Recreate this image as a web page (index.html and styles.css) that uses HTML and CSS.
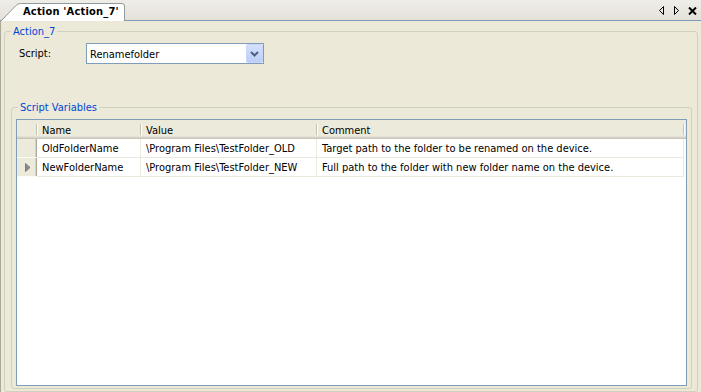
FILE: index.html
```html
<!DOCTYPE html>
<html>
<head>
<meta charset="utf-8">
<title>Action 'Action_7'</title>
<link rel="stylesheet" href="styles.css">
</head>
<body>
<div class="window">
  <div class="tabstrip">
    <div class="tab">
      <svg class="tab-shape" width="126" height="18" viewBox="0 0 126 18">
        <path d="M0.5,18.5 L15.5,3 Q17.5,0.5 20.5,0.5 L122,0.5 Q124.5,0.5 124.5,3 L124.5,18.5" fill="#ffffff" stroke="#919b9c" stroke-width="1"/>
      </svg>
      <span class="tab-label">Action 'Action_7'</span>
    </div>
    <div class="tab-controls">
      <svg class="ctl" width="6" height="9" viewBox="0 0 6 9"><path d="M4.5,0.5 L0.5,4.5 L4.5,8.5 Z" fill="none" stroke="#000" stroke-width="1"/></svg>
      <svg class="ctl ctl-next" width="6" height="9" viewBox="0 0 6 9"><path d="M0.5,0.5 L4.5,4.5 L0.5,8.5 Z" fill="none" stroke="#000" stroke-width="1"/></svg>
      <svg class="ctl ctl-close" width="9" height="8" viewBox="0 0 9 8"><path d="M1,0.5 L8,7.5 M8,0.5 L1,7.5" stroke="#000" stroke-width="2"/></svg>
    </div>
  </div>
  <div class="content">
    <fieldset class="group outer">
      <legend>Action_7</legend>
      <div class="script-row">
        <span class="script-label">Script:</span>
        <div class="combo">
          <span class="combo-text">Renamefolder</span>
          <span class="combo-btn">
            <svg width="9" height="6" viewBox="0 0 9 6"><path d="M1,1 L4.5,4.5 L8,1" fill="none" stroke="#4d6185" stroke-width="2"/></svg>
          </span>
        </div>
      </div>
      <fieldset class="group inner">
        <legend>Script Variables</legend>
        <div class="grid">
          <div class="hrow">
            <div class="hcell corner"></div>
            <div class="hcell">Name</div>
            <div class="hcell">Value</div>
            <div class="hcell">Comment</div>
          </div>
          <div class="row">
            <div class="rh"></div>
            <div class="cell">OldFolderName</div>
            <div class="cell">\Program Files\TestFolder_OLD</div>
            <div class="cell">Target path to the folder to be renamed on the device.</div>
          </div>
          <div class="row">
            <div class="rh current">
              <svg width="6" height="9" viewBox="0 0 6 9"><path d="M0.5,0.5 L5,4.5 L0.5,8.5 Z" fill="#8c8c8c" stroke="#7a7a7a" stroke-width="1"/></svg>
            </div>
            <div class="cell">NewFolderName</div>
            <div class="cell">\Program Files\TestFolder_NEW</div>
            <div class="cell">Full path to the folder with new folder name on the device.</div>
          </div>
        </div>
      </fieldset>
    </fieldset>
  </div>
</div>
</body>
</html>
```
FILE: styles.css
```css
* {
  box-sizing: border-box;
}

html,
body {
  margin: 0;
  padding: 0;
}

body {
  width: 701px;
  height: 392px;
  overflow: hidden;
  background: #ece9d8;
  color: #000;
  font-family: "DejaVu Sans Condensed", "Liberation Sans", Arial, sans-serif;
  font-size: 11px;
}

.window {
  display: flex;
  flex-direction: column;
  height: 392px;
}

/* ---------- tab strip ---------- */
.tabstrip {
  flex: none;
  display: flex;
  align-items: flex-end;
  height: 21px;
  border-bottom: 1px solid #7f9db9;
  background: linear-gradient(#eeede7, #e3e1d9);
}

.tab {
  position: relative;
  flex: none;
  width: 126px;
  height: 18px;
  margin-bottom: -1px;
}

.tab-shape {
  position: absolute;
  left: 0;
  top: 0;
}

.tab-label {
  position: relative;
  display: block;
  padding: 2px 0 0 23px;
  font-weight: bold;
  line-height: 14px;
  letter-spacing: 0.2px;
  white-space: nowrap;
}

.tab-controls {
  margin-left: auto;
  align-self: stretch;
  display: flex;
  align-items: center;
  padding-right: 4px;
  padding-top: 1px;
}

.ctl {
  display: block;
}

.ctl-next {
  margin-left: 9px;
}

.ctl-close {
  margin-left: 8px;
}

/* ---------- content ---------- */
.content {
  flex: 1;
  min-height: 0;
  display: flex;
  flex-direction: column;
  border-left: 1px solid #aca899;
}

.group {
  display: flex;
  flex-direction: column;
  min-width: 0;
  min-height: 0;
  margin: 0;
  padding: 0;
  border: 1px solid #d0d0bf;
  border-radius: 3px;
}

.group > legend {
  margin-left: 6px;
  padding: 0 2px;
  color: #0046d5;
  line-height: 13px;
}

.outer {
  flex: 1;
  margin: 4px 3px 0 3px;
}

.script-row {
  display: flex;
  align-items: center;
  margin-top: 5px;
  padding-left: 14px;
}

.script-label {
  width: 67px;
}

.combo {
  display: flex;
  align-items: center;
  width: 178px;
  height: 21px;
  border: 1px solid #7f9db9;
  background: #fff;
  padding-left: 3px;
}

.combo-text {
  flex: 1;
  padding-top: 1px;
}

.combo-btn {
  display: flex;
  align-items: center;
  justify-content: center;
  width: 17px;
  height: 19px;
  border: 1px solid #c6d5fb;
  border-radius: 2px;
  background: linear-gradient(#d5e0fc, #bccdf7);
}

.combo-btn svg {
  display: block;
}

.inner {
  flex: 1;
  margin: 37px 5px 2px 6px;
}

/* ---------- grid ---------- */
.grid {
  flex: 1;
  display: flex;
  flex-direction: column;
  margin: 5px 4px 2px 4px;
  border: 1px solid #7f9db9;
  background: #fff;
}

.hrow,
.row {
  display: grid;
  grid-template-columns: 20px 104px 176px 367px;
}

.hrow {
  height: 19px;
  background: #ebeadb;
  box-shadow: inset 0 -1px #cbc7b8, inset 0 -2px #d6d2c2, inset 0 -3px #e2e2da;
}

.hcell {
  position: relative;
  padding: 4px 0 0 5px;
  line-height: 13px;
  white-space: nowrap;
}

.hcell::after {
  content: "";
  position: absolute;
  right: 0;
  top: 4px;
  bottom: 4px;
  width: 1px;
  background: #c5c2b2;
  box-shadow: 1px 0 0 #fff;
}

.row {
  height: 19px;
}

.rh {
  display: flex;
  align-items: center;
  padding-left: 8px;
  background: #ebeadb;
  border-bottom: 1px solid #fbfbf8;
  box-shadow: inset -1px 0 #aca899, inset -2px 0 #d6d2c2;
}

.rh svg {
  display: block;
}

.cell {
  padding: 1px 0 0 5px;
  line-height: 17px;
  white-space: nowrap;
  overflow: hidden;
  border-right: 1px solid #ebe9dd;
  border-bottom: 1px solid #ebe9dd;
}
```
